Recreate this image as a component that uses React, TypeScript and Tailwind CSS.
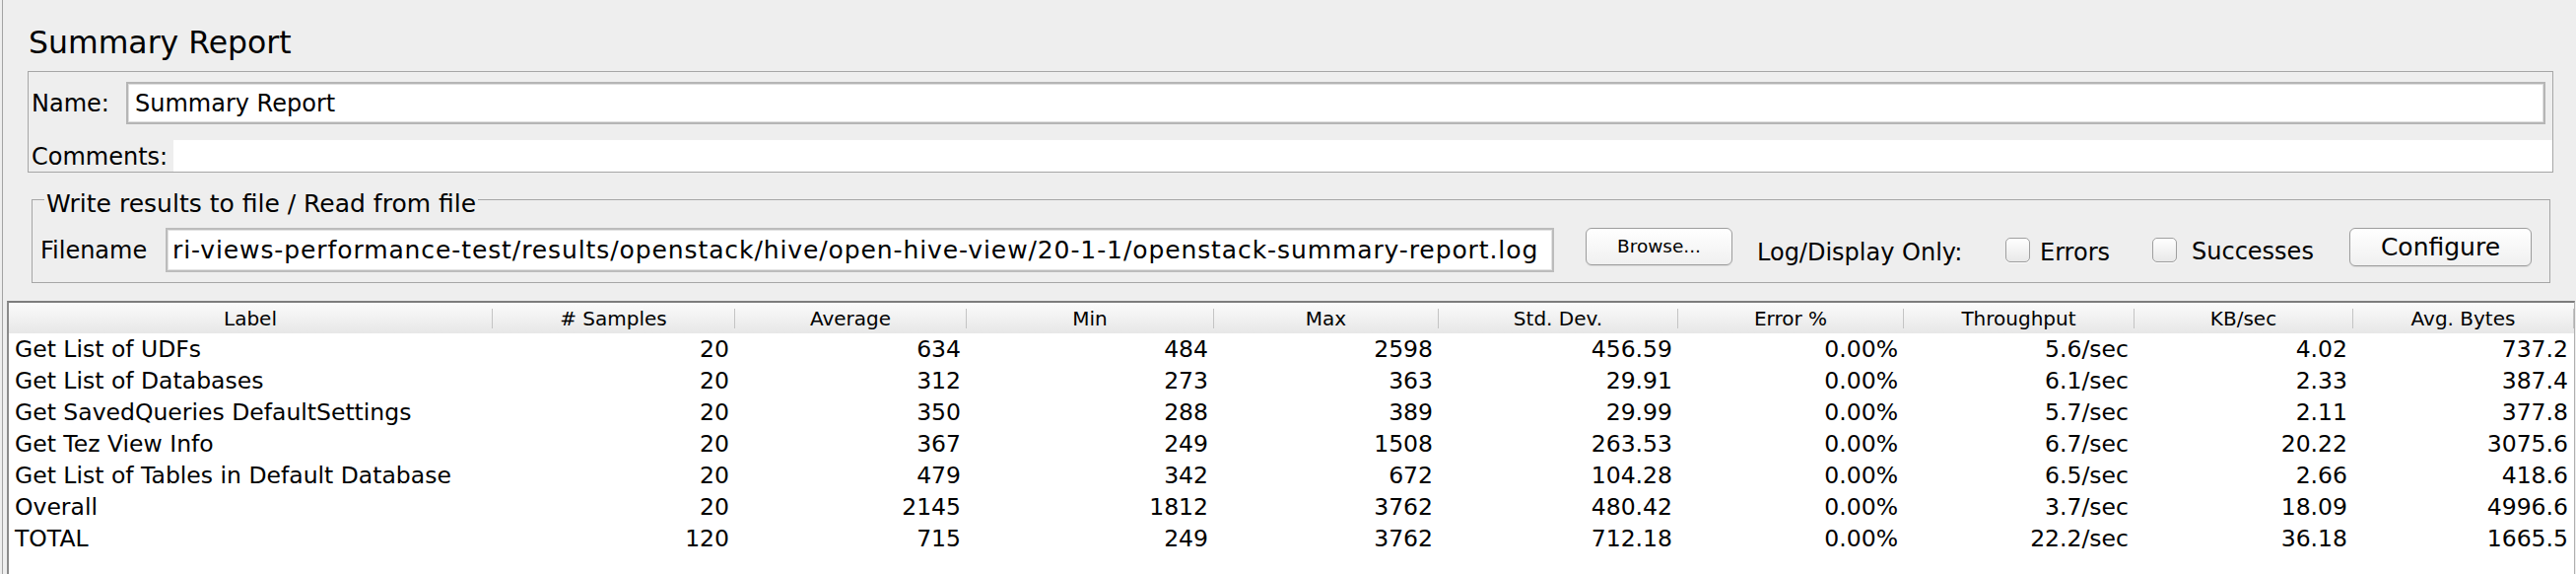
import React from "react";

const columns = [
  "Label",
  "# Samples",
  "Average",
  "Min",
  "Max",
  "Std. Dev.",
  "Error %",
  "Throughput",
  "KB/sec",
  "Avg. Bytes",
];

const rows: string[][] = [
  ["Get List of UDFs", "20", "634", "484", "2598", "456.59", "0.00%", "5.6/sec", "4.02", "737.2"],
  ["Get List of Databases", "20", "312", "273", "363", "29.91", "0.00%", "6.1/sec", "2.33", "387.4"],
  ["Get SavedQueries DefaultSettings", "20", "350", "288", "389", "29.99", "0.00%", "5.7/sec", "2.11", "377.8"],
  ["Get Tez View Info", "20", "367", "249", "1508", "263.53", "0.00%", "6.7/sec", "20.22", "3075.6"],
  ["Get List of Tables in Default Database", "20", "479", "342", "672", "104.28", "0.00%", "6.5/sec", "2.66", "418.6"],
  ["Overall", "20", "2145", "1812", "3762", "480.42", "0.00%", "3.7/sec", "18.09", "4996.6"],
  ["TOTAL", "120", "715", "249", "3762", "712.18", "0.00%", "22.2/sec", "36.18", "1665.5"],
];

const grid =
  "grid grid-cols-[491px_246px_235px_251px_228px_243px_229px_234px_222px_1fr]";

function Checkbox() {
  return (
    <div className="h-[25px] w-[25px] shrink-0 rounded-[5px] border border-[#9f9f9f] bg-gradient-to-b from-white to-[#e8e8e8] shadow-[0_1px_0_rgba(255,255,255,0.8)]" />
  );
}

export default function App() {
  return (
    <div className="h-[582px] w-full overflow-hidden bg-[#eeeeee] pl-[2px] font-['DejaVu_Sans',sans-serif] text-black">
      <div className="flex h-full flex-col border-l border-[#a3a3a3]">
        {/* title */}
        <div className="ml-[26px] mt-[25px] h-[36px] text-[31.5px] leading-[36px]">Summary Report</div>

        {/* name / comments */}
        <div className="ml-[25px] mt-[11px] w-[2563px] border border-[#a6a6a6] pl-[3px] pt-[10px]">
          <div className="flex h-[43px] items-center">
            <span className="w-[96px] text-[24px] leading-[28px]">Name:</span>
            <div className="flex h-[43px] w-[2455px] items-center border-2 border-[#b5b5b5] bg-white pl-[7px] text-[24px] shadow-[inset_0_0_0_1px_#dedede]">
              Summary Report
            </div>
          </div>
          <div className="mt-[16px] flex h-[32px]">
            <span className="w-[144px] pt-[2px] text-[24px] leading-[30px]">Comments:</span>
            <div className="h-full flex-1 bg-white" />
          </div>
        </div>

        {/* write results fieldset */}
        <div className="relative ml-[29px] mt-[27px] w-[2556px] border border-[#a6a6a6] pb-[10px] pl-[8px] pt-[28px]">
          <span className="absolute left-[12px] top-[-10px] bg-[#eeeeee] px-[2px] text-[25px] leading-[28px]">
            Write results to file / Read from file
          </span>
          <div className="flex h-[45px] items-center text-[24px] leading-[28px]">
            <span className="w-[127px] shrink-0">Filename</span>
            <div className="flex h-[45px] w-[1409px] shrink-0 items-center overflow-hidden whitespace-nowrap border-2 border-[#bcbcbc] bg-white pl-[5px] text-[25px] tracking-[0.9px] shadow-[inset_0_0_0_1px_#e2e2e2]">
              ri-views-performance-test/results/openstack/hive/open-hive-view/20-1-1/openstack-summary-report.log
            </div>
            <button className="ml-[32px] h-[38px] w-[149px] shrink-0 self-start rounded-[6px] border border-[#9d9d9d] bg-gradient-to-b from-white to-[#f0f0f0] text-[18.5px] shadow-[0_1px_1px_rgba(0,0,0,0.08)]">
              Browse...
            </button>
            <span className="ml-[25px] w-[227px] shrink-0 translate-y-[2px]">Log/Display Only:</span>
            <div className="ml-[25px]">
              <Checkbox />
            </div>
            <span className="ml-[10px] w-[114px] shrink-0 translate-y-[2px]">Errors</span>
            <Checkbox />
            <span className="ml-[15px] w-[160px] shrink-0 translate-y-[1px]">Successes</span>
            <button className="h-[39px] w-[185px] shrink-0 self-start rounded-[6px] border border-[#9d9d9d] bg-gradient-to-b from-white to-[#f0f0f0] text-[25px] shadow-[0_1px_1px_rgba(0,0,0,0.08)]">
              Configure
            </button>
          </div>
        </div>

        {/* results table */}
        <div className="ml-[4px] mt-[18px] w-[2606px] flex-1 border-l-2 border-r border-t-2 border-l-[#8a8a8a] border-r-[#b0b0b0] border-t-[#7d7d7d] bg-white">
          <div className={`${grid} h-[31px] bg-gradient-to-b from-[#fbfbfb] to-[#e7e7e7] text-[20px]`}>
            {columns.map((c) => (
              <div key={c} className="flex items-center">
                <span className="flex-1 text-center leading-[24px]">{c}</span>
                <div className="h-[20px] w-px bg-[#c4c4c4]" />
              </div>
            ))}
          </div>
          {rows.map((r) => (
            <div key={r[0]} className={`${grid} h-[32px] text-[23.5px] leading-[32px]`}>
              {r.map((v, i) => (
                <div
                  key={i}
                  className={i === 0 ? "whitespace-nowrap pl-[6px]" : "whitespace-nowrap pr-[6px] text-right"}
                >
                  {v}
                </div>
              ))}
            </div>
          ))}
        </div>
      </div>
    </div>
  );
}
